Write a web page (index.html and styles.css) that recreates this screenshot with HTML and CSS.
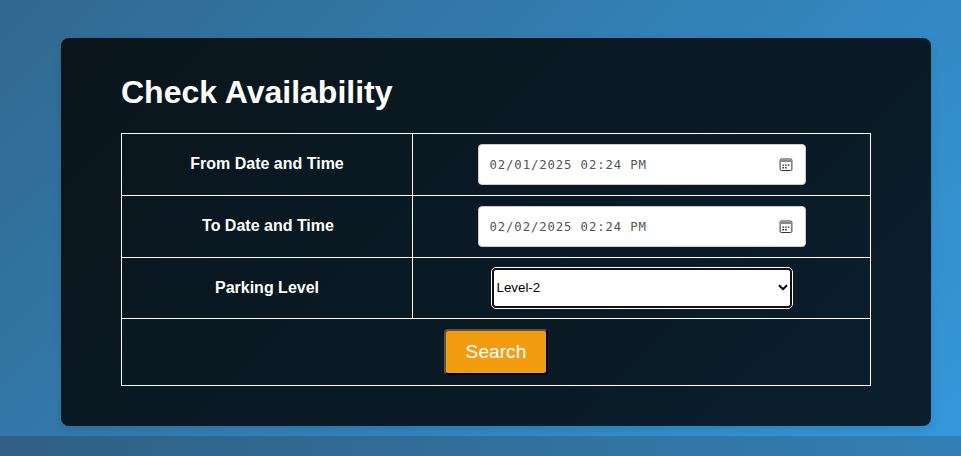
FILE: index.html
```
<!DOCTYPE html>
<html lang="en">
<head>
<meta charset="utf-8">
<title>Check Availability</title>
<link rel="stylesheet" href="styles.css">
</head>
<body>
<main class="page">
  <section class="panel">
    <h1>Check Availability</h1>
    <table>
      <tr class="field-row">
        <th>From Date and Time</th>
        <td><div class="date"><span>02/01/2025 02:24 PM</span>
          <svg width="14" height="14" viewBox="0 0 14 14"><rect x="1.1" y="1" width="11.8" height="11.5" rx="1.3" fill="none" stroke="#333" stroke-width="1"/><path d="M1.6 2h10.8v2H1.6z" fill="#888"/><path d="M3.4 6.4h1.5v1.4H3.4zM6.1 6.4h1.5v1.4H6.1zM8.8 6.4h1.5v1.4H8.8zM3.4 9h1.5v1.4H3.4zM6.1 9h1.5v1.4H6.1z" fill="#222"/></svg></div></td>
      </tr>
      <tr class="field-row">
        <th class="second">To Date and Time</th>
        <td><div class="date"><span>02/02/2025 02:24 PM</span>
          <svg width="14" height="14" viewBox="0 0 14 14"><rect x="1.1" y="1" width="11.8" height="11.5" rx="1.3" fill="none" stroke="#333" stroke-width="1"/><path d="M1.6 2h10.8v2H1.6z" fill="#888"/><path d="M3.4 6.4h1.5v1.4H3.4zM6.1 6.4h1.5v1.4H6.1zM8.8 6.4h1.5v1.4H8.8zM3.4 9h1.5v1.4H3.4zM6.1 9h1.5v1.4H6.1z" fill="#222"/></svg></div></td>
      </tr>
      <tr class="level-row">
        <th>Parking Level</th>
        <td><div class="select"><span>Level-2</span>
          <svg width="10" height="7" viewBox="0 0 10 7"><path d="M1 1.2l4 4 4-4" fill="none" stroke="#000" stroke-width="2"/></svg></div></td>
      </tr>
      <tr class="action-row">
        <td colspan="2"><button type="button">Search</button></td>
      </tr>
    </table>
  </section>
</main>
<footer></footer>
</body>
</html>
```
FILE: styles.css
```
* { box-sizing: border-box; }
body {
  margin: 0;
  height: 456px;
  overflow: hidden;
  font-family: "Liberation Sans", Arial, sans-serif;
  color: #fff;
}
.page {
  height: 436px;
  padding: 38px 30px 0 61px;
  background: linear-gradient(135deg, #31688f 0%, #3498db 100%);
}
.panel {
  height: 388px;
  padding: 36px 60px 0;
  border-radius: 8px;
  background: linear-gradient(135deg, #0a151c, #0a1e2c);
  box-shadow: 0 4px 8px rgba(0, 0, 0, 0.1);
}
h1 { margin: 0 0 22px; font-size: 32px; line-height: 37px; }
table {
  width: 750px;
  border-collapse: collapse;
  table-layout: fixed;
  font-size: 16px;
}
th, td { border: 1px solid #fff; padding: 0; text-align: center; vertical-align: middle; }
th { width: 291px; padding-bottom: 2px; }
.second { padding-left: 2px; }
.field-row { height: 62px; }
.level-row { height: 61px; }
.level-row th { padding-bottom: 0; }
.level-row td { padding-bottom: 1px; }
.action-row { height: 67px; }
.date {
  display: flex;
  align-items: center;
  justify-content: space-between;
  width: 328px;
  height: 41px;
  margin: 0 auto;
  padding: 0 12px 0 11px;
  border: 1px solid #ccc;
  border-radius: 4px;
  background: #fff;
  color: #555;
  font: 12.3px "DejaVu Sans Mono", monospace;
  letter-spacing: 0.88px;
}
.select {
  display: flex;
  align-items: center;
  justify-content: space-between;
  width: 300px;
  height: 40px;
  margin: 0 auto;
  padding: 0 2px;
  border: 2px solid #101010;
  border-radius: 4px;
  outline: 1px solid #fff;
  background: #fff;
  color: #000;
  font-size: 13.33px;
}
.select span { padding-left: 1px; margin-bottom: 1px; }
button {
  display: block;
  width: 104px;
  height: 46px;
  margin: 0 auto;
  padding: 0;
  border: 2px outset #000;
  border-radius: 4px;
  background: #f39c12;
  color: #fff;
  font: 19.2px "Liberation Sans", Arial, sans-serif;
}
footer { height: 20px; background: linear-gradient(90deg, #305f83, #337fb5); }
```
